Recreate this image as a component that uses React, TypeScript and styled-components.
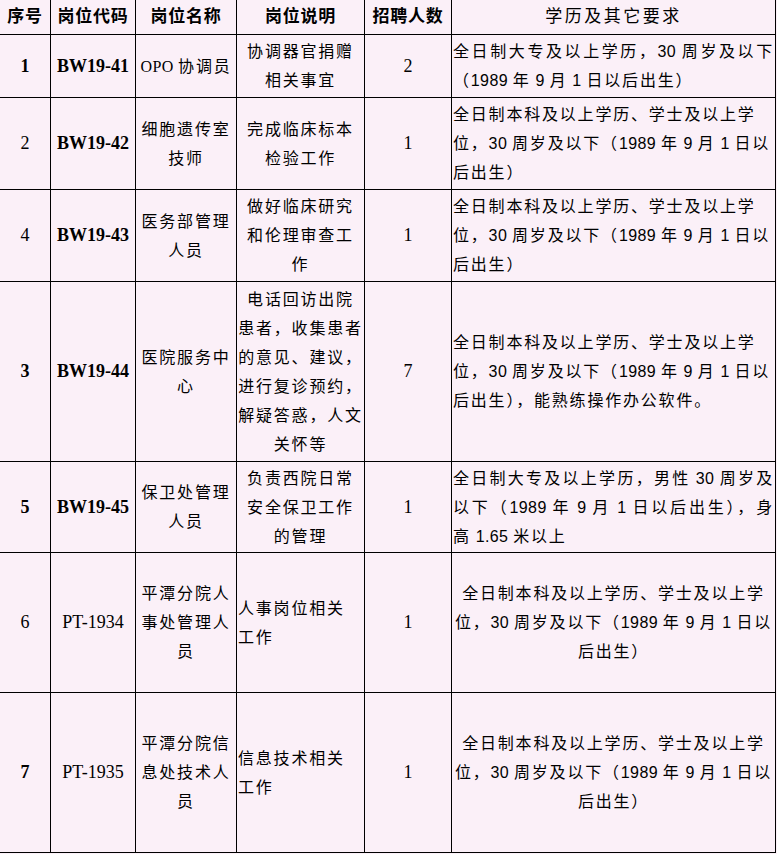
import React from 'react';
import styled, { createGlobalStyle } from 'styled-components';

const PINK = '#fbf0f8';

const GlobalStyle = createGlobalStyle`
  html, body {
    margin: 0;
    padding: 0;
    background: ${PINK};
  }
  body {
    font-family: "Noto Sans CJK SC", sans-serif;
    color: #000;
  }
`;

const Sheet = styled.div`
  display: grid;
  grid-template-columns: 50px 84px 100px 127px 86px 323px;
  grid-template-rows: 34px 62px 91px 91px 179px 90px 139px 159px;
  gap: 1px;
  width: max-content;
  background: #000;
  border: 1px solid #000;
  margin: -1px 0 0 -1px;
`;

type Align = 'left' | 'center';
type Face = 'serif' | 'sans';

const Cell = styled.div<{ $align?: Align; $face?: Face; $bold?: boolean }>`
  display: flex;
  flex-direction: column;
  justify-content: center;
  min-width: 0;
  overflow: hidden;
  padding: 0 1px;
  background: ${PINK};
  text-align: ${(p) => p.$align ?? 'center'};
  font-family: ${(p) => (p.$face === 'serif' ? '"Liberation Serif"' : '"Liberation Sans"')},
    "Noto Sans CJK SC", sans-serif;
  font-weight: ${(p) => (p.$bold ? 700 : 400)};
  font-size: 16px;
  line-height: 29px;
  letter-spacing: 1.8px;
`;

const HeadCell = styled(Cell)`
  font-size: 17px;
  letter-spacing: ${(p) => (p.$bold ? '0.8px' : '2.5px')};
  line-height: 22px;
`;

const CodeCell = styled(Cell)`
  font-size: 18px;
  letter-spacing: 0;
`;

const Line = styled.span<{ $justify?: boolean }>`
  display: block;
  white-space: ${(p) => (p.$justify ? 'normal' : 'nowrap')};
  ${(p) => (p.$justify ? 'text-align: justify; text-align-last: justify;' : '')}
`;

const Latin = styled.span`
  letter-spacing: 0.4px;
`;

const Mono = styled.span`
  font-family: "Liberation Mono", monospace;
  letter-spacing: 0;
`;

const rich = (s: string) =>
  s
    .split(/(\d+\.\d+|[\x20-\x7e]+)/)
    .filter(Boolean)
    .map((part, i) => {
      if (/^\d+\.\d+$/.test(part)) return <Mono key={i}>{part}</Mono>;
      if (/^[\x20-\x7e]+$/.test(part)) return <Latin key={i}>{part}</Latin>;
      return <React.Fragment key={i}>{part}</React.Fragment>;
    });

type ReqLine = { text: string; justify?: boolean };

type Post = {
  no: string;
  noBold: boolean;
  code: string;
  codeBold: boolean;
  name: string[];
  desc: string[];
  descAlign: Align;
  count: string;
  req: ReqLine[];
  reqAlign: Align;
};

const BENKE: ReqLine[] = [
  { text: '全日制本科及以上学历、学士及以上学' },
  { text: '位，30 周岁及以下（1989 年 9 月 1 日以' },
  { text: '后出生）' },
];

const posts: Post[] = [
  {
    no: '1',
    noBold: true,
    code: 'BW19-41',
    codeBold: true,
    name: ['OPO 协调员'],
    desc: ['协调器官捐赠', '相关事宜'],
    descAlign: 'center',
    count: '2',
    req: [
      { text: '全日制大专及以上学历，30 周岁及以下', justify: true },
      { text: '（1989 年 9 月 1 日以后出生）' },
    ],
    reqAlign: 'left',
  },
  {
    no: '2',
    noBold: false,
    code: 'BW19-42',
    codeBold: true,
    name: ['细胞遗传室', '技师'],
    desc: ['完成临床标本', '检验工作'],
    descAlign: 'center',
    count: '1',
    req: BENKE,
    reqAlign: 'left',
  },
  {
    no: '4',
    noBold: false,
    code: 'BW19-43',
    codeBold: true,
    name: ['医务部管理', '人员'],
    desc: ['做好临床研究', '和伦理审查工', '作'],
    descAlign: 'center',
    count: '1',
    req: BENKE,
    reqAlign: 'left',
  },
  {
    no: '3',
    noBold: true,
    code: 'BW19-44',
    codeBold: true,
    name: ['医院服务中', '心'],
    desc: ['电话回访出院', '患者，收集患者', '的意见、建议，', '进行复诊预约，', '解疑答惑，人文', '关怀等'],
    descAlign: 'center',
    count: '7',
    req: [
      { text: '全日制本科及以上学历、学士及以上学' },
      { text: '位，30 周岁及以下（1989 年 9 月 1 日以' },
      { text: '后出生），能熟练操作办公软件。' },
    ],
    reqAlign: 'left',
  },
  {
    no: '5',
    noBold: true,
    code: 'BW19-45',
    codeBold: true,
    name: ['保卫处管理', '人员'],
    desc: ['负责西院日常', '安全保卫工作', '的管理'],
    descAlign: 'center',
    count: '1',
    req: [
      { text: '全日制大专及以上学历，男性 30 周岁及', justify: true },
      { text: '以下（1989 年 9 月 1 日以后出生），身', justify: true },
      { text: '高 1.65 米以上' },
    ],
    reqAlign: 'left',
  },
  {
    no: '6',
    noBold: false,
    code: 'PT-1934',
    codeBold: false,
    name: ['平潭分院人', '事处管理人', '员'],
    desc: ['人事岗位相关', '工作'],
    descAlign: 'left',
    count: '1',
    req: BENKE,
    reqAlign: 'center',
  },
  {
    no: '7',
    noBold: true,
    code: 'PT-1935',
    codeBold: false,
    name: ['平潭分院信', '息处技术人', '员'],
    desc: ['信息技术相关', '工作'],
    descAlign: 'left',
    count: '1',
    req: BENKE,
    reqAlign: 'center',
  },
];

const headers: { label: string; bold: boolean }[] = [
  { label: '序号', bold: true },
  { label: '岗位代码', bold: true },
  { label: '岗位名称', bold: true },
  { label: '岗位说明', bold: true },
  { label: '招聘人数', bold: true },
  { label: '学历及其它要求', bold: false },
];

export default function App() {
  return (
    <>
      <GlobalStyle />
      <Sheet>
        {headers.map((h) => (
          <HeadCell key={h.label} $bold={h.bold}>
            {h.label}
          </HeadCell>
        ))}
        {posts.map((p) => (
          <React.Fragment key={p.code}>
            <CodeCell $face="serif" $bold={p.noBold}>
              {p.no}
            </CodeCell>
            <CodeCell $face="serif" $bold={p.codeBold}>
              {p.code}
            </CodeCell>
            <Cell $face="serif">
              {p.name.map((l, i) => (
                <Line key={i}>{rich(l)}</Line>
              ))}
            </Cell>
            <Cell $align={p.descAlign}>
              {p.desc.map((l, i) => (
                <Line key={i}>{rich(l)}</Line>
              ))}
            </Cell>
            <CodeCell $face="serif">{p.count}</CodeCell>
            <Cell $align={p.reqAlign} $face="sans">
              {p.req.map((l, i) => (
                <Line key={i} $justify={l.justify}>
                  {rich(l.text)}
                </Line>
              ))}
            </Cell>
          </React.Fragment>
        ))}
      </Sheet>
    </>
  );
}
